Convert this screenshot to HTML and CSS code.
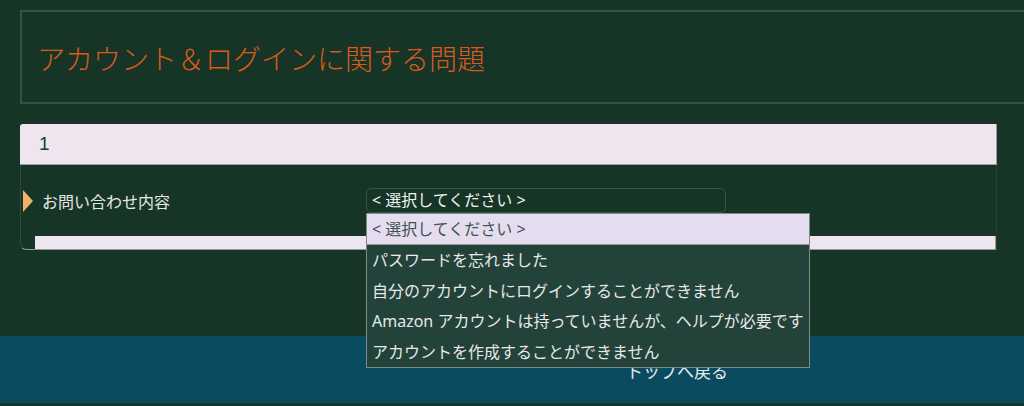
FILE: index.html
```html
<!DOCTYPE html>
<html lang="ja">
<head>
<meta charset="utf-8">
<title>アカウント＆ログインに関する問題</title>
<link rel="stylesheet" href="styles.css">
</head>
<body>
<div class="page">
  <div class="title-box">
    <h1 class="title">アカウント＆ログインに関する問題</h1>
  </div>
  <section class="panel">
    <div class="panel-head">1</div>
    <div class="panel-body">
      <div class="row">
        <div class="label"><span class="marker"></span>お問い合わせ内容</div>
        <div class="field">
          <div class="select">&lt; 選択してください &gt;</div>
          <ul class="menu">
            <li class="opt opt-active">&lt; 選択してください &gt;</li>
            <li class="opt">パスワードを忘れました</li>
            <li class="opt">自分のアカウントにログインすることができません</li>
            <li class="opt">Amazon アカウントは持っていませんが、ヘルプが必要です</li>
            <li class="opt">アカウントを作成することができません</li>
          </ul>
        </div>
      </div>
      <div class="panel-foot"></div>
    </div>
  </section>
</div>
<footer class="footer">
  <a class="back" href="#">トップへ戻る</a>
</footer>
<div class="bottom-strip"></div>
</body>
</html>
```

FILE: styles.css
```css
html, body {
  margin: 0;
  padding: 0;
  overflow: hidden;
}
body {
  background: #163527;
  font-family: "Noto Sans", "Noto Sans CJK JP", sans-serif;
  color: #e8e8e8;
  width: 1024px;
  height: 406px;
}
.page {
  padding: 10px 0 0 20px;
}
.title-box {
  width: 1020px;
  height: 90px;
  border: 2px solid #2d534e;
  border-right: none;
  display: flex;
  align-items: center;
  box-sizing: content-box;
}
.title {
  margin: 0 0 0 15px;
  font-family: "Noto Sans CJK JP", sans-serif;
  font-weight: 300;
  font-size: 28px;
  line-height: 1;
  color: #d95a1c;
  padding-top: 2px;
}
.panel {
  margin-top: 20px;
  width: 977px;
}
.panel-head {
  height: 40px;
  background: #efe5ee;
  border-right: 1px solid #9a9a9a;
  border-bottom: 1px solid #a3a0a3;
  border-top-left-radius: 3px;
  color: #1c3b31;
  font-size: 19px;
  line-height: 40px;
  padding-left: 19px;
  font-family: "Liberation Sans", "Noto Sans", sans-serif;
}
.panel-body {
  border-left: 1px solid #2c4c43;
  border-right: 1px solid #243f37;
  border-bottom: 1px solid #8a9aa2;
  border-bottom-left-radius: 6px;
  padding-top: 23px;
}
.row {
  display: grid;
  grid-template-columns: 345px 360px;
  align-items: center;
  height: 25px;
}
.label {
  display: flex;
  align-items: center;
  font-size: 16px;
  color: #e6e6e6;
  font-family: "Noto Sans CJK JP", sans-serif;
  white-space: nowrap;
}
.marker {
  width: 0;
  height: 0;
  border-top: 11px solid transparent;
  border-bottom: 11px solid transparent;
  border-left: 10px solid #f4b266;
  margin: 0 9px 0 2px;
}
.field {
  position: relative;
}
.select {
  height: 23px;
  border: 1px solid #2f5550;
  border-radius: 5px;
  padding-left: 5px;
  font-size: 16px;
  line-height: 22px;
  color: #f0f0f0;
  white-space: nowrap;
}
.menu {
  position: absolute;
  left: 0;
  top: 25px;
  width: 442px;
  margin: 0;
  padding: 0;
  list-style: none;
  background: #22423a;
  border: 1px solid #7d8c8a;
  z-index: 2;
}
.opt {
  height: 30.6px;
  line-height: 30px;
  padding-left: 5px;
  font-size: 16px;
  color: #e8e8e8;
  white-space: nowrap;
}
.opt-active {
  background: #e5ddef;
  color: #3d5450;
  border-bottom: 1px solid #8a9a98;
  height: 30px;
}
.panel-foot {
  margin-top: 23px;
  margin-left: 14px;
  height: 13px;
  background: #efe5ee;
  border-right: 1px solid #9a9a9a;
}
.footer {
  margin-top: 86px;
  height: 67px;
  background: #0a4b5f;
  display: flex;
  align-items: center;
  padding-left: 626px;
}
.back {
  color: #e8e8e8;
  text-decoration: none;
  font-size: 17px;
  font-family: "Noto Sans CJK JP", sans-serif;
  padding-top: 2px;
}
.bottom-strip {
  height: 3px;
  background: #15352b;
}
```
